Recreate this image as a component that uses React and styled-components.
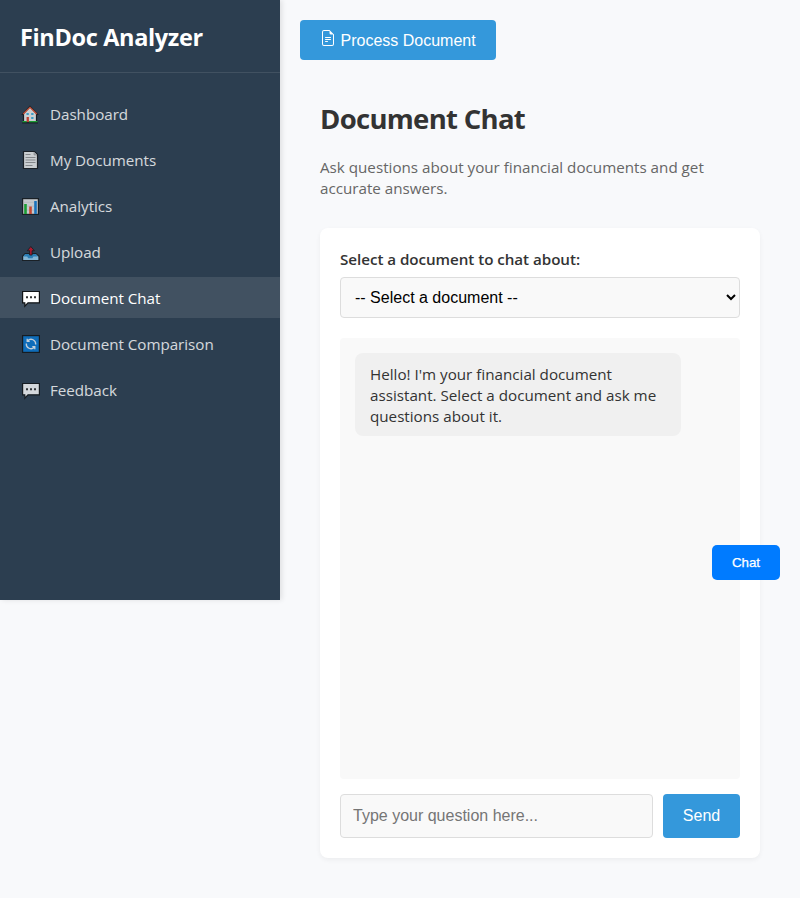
import React from "react";
import styled, { createGlobalStyle } from "styled-components";

const GlobalStyle = createGlobalStyle`
  * { box-sizing: border-box; }
  body {
    margin: 0;
    background: #f8f9fb;
    color: #333;
    font-family: "Open Sans", "Noto Sans", sans-serif;
    font-size: 15.2px;
    line-height: 21px;
  }
  button, input, select { font-family: "Liberation Sans", Arial, sans-serif; }
`;

const Page = styled.div`
  position: relative;
  display: flex;
  align-items: flex-start;
  height: 898px;
  overflow: hidden;
`;

const Sidebar = styled.aside`
  width: 280px;
  height: 600px;
  flex: none;
  background: #2c3e50;
  color: #fff;
  box-shadow: 2px 0 5px rgba(0, 0, 0, 0.1);
`;

const Brand = styled.div`
  height: 73px;
  padding: 21px 20px 0;
  border-bottom: 1px solid rgba(255, 255, 255, 0.1);
  font-size: 23.5px;
  font-weight: 700;
  line-height: 32px;
  letter-spacing: -0.35px;
  white-space: nowrap;
`;

const Nav = styled.nav`
  display: flex;
  flex-direction: column;
  gap: 5px;
  padding-top: 20px;
`;

const NavItem = styled.a`
  display: flex;
  align-items: center;
  gap: 10px;
  height: 41px;
  padding: 0 20px;
  color: #fff;
  background: ${(p) => (p.$active ? "rgba(255, 255, 255, 0.1)" : "transparent")};

  > * { opacity: ${(p) => (p.$active ? 1 : 0.8)}; }
`;

const NavIcon = styled.svg`
  width: 20px;
  height: 21px;
  flex: none;
`;

const NavLabel = styled.span`
  padding-top: 2px;
  letter-spacing: -0.03px;
  white-space: nowrap;
`;

const Main = styled.main`
  flex: 1;
  padding: 20px;
`;

const ProcessButton = styled.button`
  display: flex;
  align-items: flex-start;
  gap: 4.5px;
  width: 196px;
  height: 40px;
  padding: 10px 20px;
  border: 0;
  border-radius: 4px;
  background: #3498db;
  color: #fff;
  font-size: 16px;
  line-height: 22px;
  white-space: nowrap;

  svg { flex: none; }
`;

const Content = styled.section`
  padding: 40px 20px 0;
`;

const Title = styled.h1`
  margin: 0;
  font-size: 27.5px;
  font-weight: 700;
  line-height: 38px;
  letter-spacing: -0.7px;
`;

const Intro = styled.p`
  margin: 19px 0 29px;
  color: #666;
`;

const Card = styled.div`
  width: 440px;
  height: 630px;
  padding: 20px;
  border-radius: 8px;
  background: #fff;
  box-shadow: 0 2px 5px rgba(0, 0, 0, 0.05);
`;

const FieldLabel = styled.label`
  display: block;
  height: 29px;
  padding-top: 1px;
  font-weight: 600;
  letter-spacing: -0.05px;
`;

const DocumentSelect = styled.select`
  display: block;
  width: 100%;
  height: 41px;
  margin-bottom: 20px;
  padding: 10px;
  border: 1px solid #ddd;
  border-radius: 4px;
  background-color: #f9f9f9;
  color: #000;
  font-size: 16px;
`;

const Messages = styled.div`
  height: 441px;
  margin-bottom: 15px;
  padding: 15px;
  border-radius: 4px;
  background: #f9f9f9;
`;

const Message = styled.div`
  width: 326px;
  height: 83px;
  padding: 11px 15px 9px;
  border-radius: 8px;
  background: #f0f0f0;
  white-space: nowrap;
`;

const Composer = styled.div`
  display: flex;
  gap: 10px;
  height: 44px;
`;

const QuestionInput = styled.input`
  flex: 1;
  min-width: 0;
  padding: 0 12px;
  border: 1px solid #ddd;
  border-radius: 4px;
  background: #f9f9f9;
  font-size: 16px;

  &::placeholder { color: #757575; }
`;

const SendButton = styled.button`
  width: 77px;
  padding: 0;
  border: 0;
  border-radius: 4px;
  background: #3498db;
  color: #fff;
  font-size: 16px;
`;

const ChatButton = styled.button`
  position: absolute;
  top: 545px;
  right: 20px;
  width: 68px;
  height: 35px;
  padding: 0;
  border: 0;
  border-radius: 5px;
  background: #007bff;
  color: #fff;
  font-size: 13.333px;
  -webkit-text-stroke: 0.25px #fff;
`;

const HouseIcon = () => (
  <NavIcon viewBox="0 0 20 21">
    <path d="M2.500 11.500L10 3.500l7.500 8h-1v7.500h-13v-7.500z" fill="#f2f2f2" stroke="#111417" strokeWidth="1.200" />
    <path d="M3.200 11L10 4.300l6.800 6.700" fill="none" stroke="#e8502f" strokeWidth="1.300" />
    <path d="M6.500 10h2.300v2H6.500zM11.200 10h2.300v2h-2.300zM11.200 14h2.300v2h-2.300z" fill="#3fb5e5" />
    <path d="M6.600 14h2.300v5H6.600z" fill="#e0402a" />
    <path d="M2.500 18h4.100v1.500H2.500zM9 18h8.500v1.500H9z" fill="#16b52c" />
    <path d="M2 20h16" stroke="#111417" strokeWidth="0.900" />
  </NavIcon>
);

const PageIcon = () => (
  <NavIcon viewBox="0 0 20 21">
    <path d="M3.500 2.500h11l3 3v14h-14z" fill="#f2f2f2" stroke="#16191c" strokeWidth="1.200" />
    <path d="M14 3v3h3" fill="#ccc" stroke="#888" strokeWidth="0.500" />
    <path d="M5.500 5.500h5M5.500 8.500h10M5.500 11h10M5.500 13.500h10M5.500 16.500h7" stroke="#999" strokeWidth="1" />
  </NavIcon>
);

const ChartIcon = () => (
  <NavIcon viewBox="0 0 20 21">
    <rect x="2.600" y="3.600" width="15.800" height="15.800" fill="#ececec" stroke="#16191c" strokeWidth="1.200" />
    <path d="M3.200 7.300h14.600M3.200 11.200h14.600M3.200 15.200h14.600" stroke="#cfcfcf" strokeWidth="0.600" />
    <path d="M4.200 9h2.600v10H4.200z" fill="#16b52c" />
    <path d="M9.200 11.500h2.600V19H9.200z" fill="#ee4b2b" />
    <path d="M14.200 6h2.600v13h-2.600z" fill="#1680d8" />
  </NavIcon>
);

const UploadIcon = () => (
  <NavIcon viewBox="0 0 20 21">
    <path d="M5 12.500h11l3 2.800v4.200H2.600v-4.200z" fill="#9bd3f4" stroke="#16191c" strokeWidth="1.200" />
    <path d="M5.200 13.100h10.600l2 2.300h-4.400l-1 1.800H8.200l-1-1.800H3.200z" fill="#2b8fd0" />
    <path d="M10.800 5.500l3.600 4.200h-2.300V14H9.600V9.700H7.300z" fill="#ce1028" stroke="#16191c" strokeWidth="0.900" />
  </NavIcon>
);

const BubbleIcon = () => (
  <NavIcon viewBox="0 0 20 21">
    <path d="M2.600 4.500h16.800v11.300H8L4.800 19.200v-3.400H2.600z" fill="#fff" stroke="#111417" strokeWidth="1.200" />
    <path d="M6 9.200h2v2H6zM10 9.200h2v2h-2zM14 9.200h2v2h-2z" fill="#333" />
  </NavIcon>
);

const CompareIcon = () => (
  <NavIcon viewBox="0 0 20 21">
    <rect x="2.600" y="2.600" width="16.800" height="16.800" fill="#0878d4" stroke="#111417" strokeWidth="1.200" />
    <path
      d="M15.700 11.500A4.700 4.700 0 0 0 7.700 7.700M6.300 10.500a4.700 4.700 0 0 0 8 3.800M7.200 5.800v2.500h2.500M14.800 16.200v-2.500h-2.500"
      fill="none"
      stroke="#e8f3fb"
      strokeWidth="1.300"
    />
  </NavIcon>
);

const FileTextIcon = () => (
  <svg width="16" height="16" viewBox="0 0 16 16" fill="currentColor">
    <path d="M5.500 7a.5.5 0 0 0 0 1h5a.5.5 0 0 0 0-1zM5 9.500a.5.5 0 0 1 .5-.5h5a.5.5 0 0 1 0 1h-5a.5.5 0 0 1-.5-.5m0 2a.5.5 0 0 1 .5-.5h2a.5.5 0 0 1 0 1h-2a.5.5 0 0 1-.5-.5" />
    <path d="M9.500 0H4a2 2 0 0 0-2 2v12a2 2 0 0 0 2 2h8a2 2 0 0 0 2-2V4.500zm0 1v2A1.500 1.500 0 0 0 11 4.500h2V14a1 1 0 0 1-1 1H4a1 1 0 0 1-1-1V2a1 1 0 0 1 1-1z" />
  </svg>
);

const navItems = [
  { label: "Dashboard", Icon: HouseIcon },
  { label: "My Documents", Icon: PageIcon },
  { label: "Analytics", Icon: ChartIcon },
  { label: "Upload", Icon: UploadIcon },
  { label: "Document Chat", Icon: BubbleIcon, active: true },
  { label: "Document Comparison", Icon: CompareIcon },
  { label: "Feedback", Icon: BubbleIcon },
];

export default function App() {
  return (
    <>
      <GlobalStyle />
      <Page>
        <Sidebar>
          <Brand>FinDoc Analyzer</Brand>
          <Nav>
            {navItems.map(({ label, Icon, active }) => (
              <NavItem key={label} $active={active}>
                <Icon />
                <NavLabel>{label}</NavLabel>
              </NavItem>
            ))}
          </Nav>
        </Sidebar>
        <Main>
          <ProcessButton>
            <FileTextIcon />
            Process Document
          </ProcessButton>
          <Content>
            <Title>Document Chat</Title>
            <Intro>
              Ask questions about your financial documents and get
              <br />
              accurate answers.
            </Intro>
            <Card>
              <FieldLabel htmlFor="document">Select a document to chat about:</FieldLabel>
              <DocumentSelect id="document">
                <option>-- Select a document --</option>
              </DocumentSelect>
              <Messages>
                <Message>
                  Hello! I'm your financial document
                  <br />
                  assistant. Select a document and ask me
                  <br />
                  questions about it.
                </Message>
              </Messages>
              <Composer>
                <QuestionInput placeholder="Type your question here..." />
                <SendButton>Send</SendButton>
              </Composer>
            </Card>
          </Content>
        </Main>
        <ChatButton>Chat</ChatButton>
      </Page>
    </>
  );
}
